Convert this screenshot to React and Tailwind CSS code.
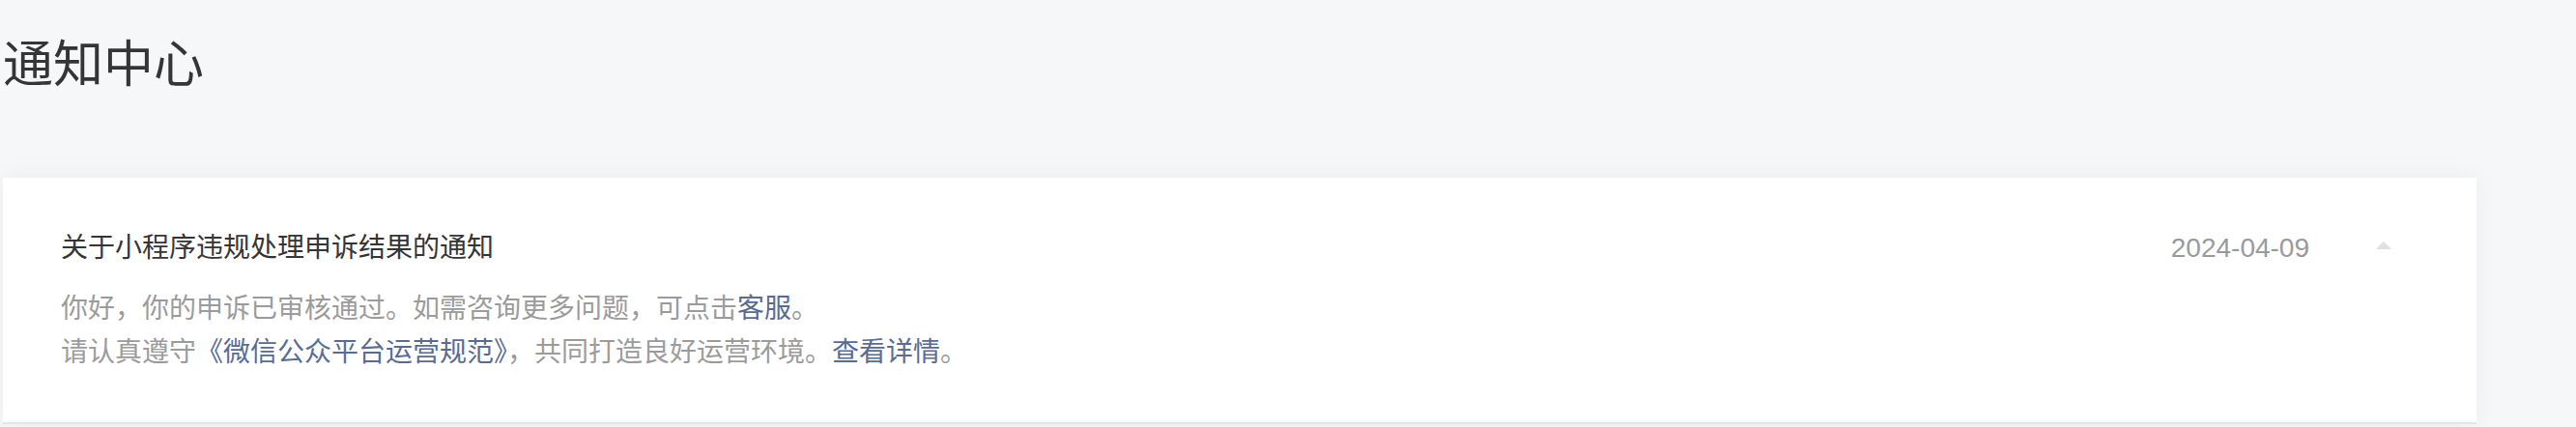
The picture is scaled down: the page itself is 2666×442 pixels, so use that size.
import React from "react";

const font = { fontFamily: '"Liberation Sans", "Noto Sans CJK SC", sans-serif' };

function Caret() {
  return (
    <svg width="16" height="8" viewBox="0 0 16 8" className="shrink-0">
      <path d="M8 0 L16 8 L0 8 Z" fill="#dfdfe4" />
    </svg>
  );
}

export default function App() {
  return (
    <div className="h-[442px] w-full overflow-hidden bg-[#f6f7f9] pl-[3px]" style={font}>
      {/* 页面标题 */}
      <h1 className="pt-[41px] text-[52px] leading-[52px] font-normal text-[#353535]">通知中心</h1>

      {/* 通知卡片 */}
      <div className="mt-[91px] w-[2560px] bg-white border-b-2 border-[#e4e5ea] shadow-[0_0_24px_rgba(0,0,0,0.05)]">
        <div className="pl-[60px] pr-[88px] pt-[50px] pb-[50px]">
          <div className="flex items-center">
            <div className="flex-1 text-[28px] leading-[45px] text-[#353535]">关于小程序违规处理申诉结果的通知</div>
            <div className="text-[28px] leading-[45px] text-[#9a9a9a]">2024-04-09</div>
            <div className="ml-[69px] pb-[6px]">
              <Caret />
            </div>
          </div>
          <div className="mt-[18px] text-[28px] leading-[45px] text-[#9b9b9b]">
            <p>
              你好，你的申诉已审核通过。如需咨询更多问题，可点击<span className="text-[#576b95]">客服</span>。
            </p>
            <p>
              请认真遵守<span className="text-[#576b95]">《微信公众平台运营规范》</span>，共同打造良好运营环境。<span className="text-[#576b95]">查看详情</span>。
            </p>
          </div>
        </div>
      </div>
    </div>
  );
}
